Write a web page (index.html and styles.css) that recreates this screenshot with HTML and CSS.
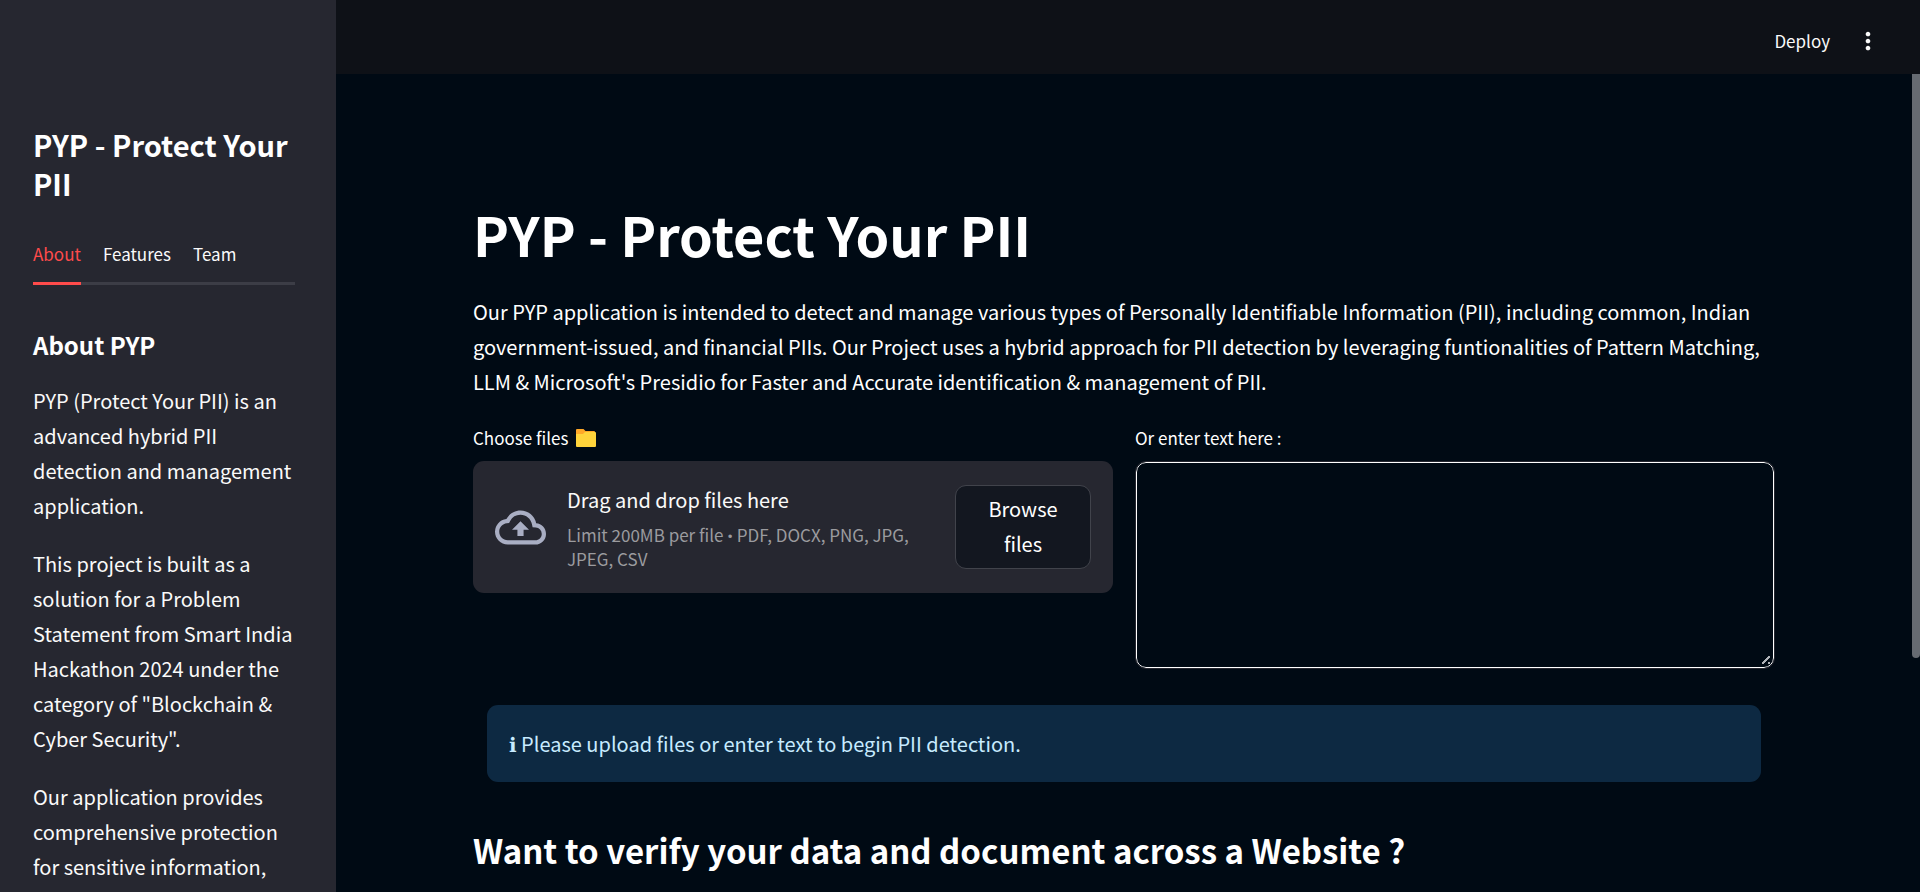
FILE: index.html
```html
<!DOCTYPE html>
<html lang="en">
<head>
<meta charset="utf-8">
<meta name="viewport" content="width=device-width, initial-scale=1">
<title>PYP - Protect Your PII</title>
<link rel="stylesheet" href="styles.css">
</head>
<body>
<div class="app">
  <aside class="sidebar">
    <h2 class="sidebar-title">PYP - Protect Your PII</h2>
    <div class="tabs" role="tablist">
      <button class="tab tab-active" type="button" role="tab" aria-selected="true">About</button>
      <button class="tab" type="button" role="tab" aria-selected="false">Features</button>
      <button class="tab" type="button" role="tab" aria-selected="false">Team</button>
    </div>
    <section class="about" role="tabpanel">
      <h3 class="about-title">About PYP</h3>
      <p>PYP (Protect Your PII) is an advanced hybrid PII detection and management application.</p>
      <p>This project is built as a solution for a Problem Statement from Smart India Hackathon 2024 under the category of "Blockchain &amp; Cyber Security".</p>
      <p>Our application provides comprehensive protection for sensitive information,</p>
    </section>
  </aside>
  <div class="page">
    <header class="toolbar">
      <button class="deploy" type="button">Deploy</button>
      <button class="menu" type="button" aria-label="Main menu">
        <svg class="menu-icon" viewBox="0 0 24 24" aria-hidden="true"><path d="M12 8c1.100 0 2-.9 2-2s-.9-2-2-2-2 .9-2 2 .9 2 2 2zm0 2c-1.100 0-2 .9-2 2s.9 2 2 2 2-.9 2-2-.9-2-2-2zm0 6c-1.100 0-2 .9-2 2s.9 2 2 2 2-.9 2-2-.9-2-2-2z"/></svg>
      </button>
    </header>
    <main class="content">
      <h1 class="title">PYP - Protect Your PII</h1>
      <p class="intro">Our PYP application is intended to detect and manage various types of Personally Identifiable Information (PII), including common, Indian government-issued, and financial PIIs. Our Project uses a hybrid approach for PII detection by leveraging funtionalities of Pattern Matching, LLM &amp; Microsoft's Presidio for Faster and Accurate identification &amp; management of PII.</p>
      <div class="inputs">
        <div class="field">
          <div class="label" id="files-label">Choose files
            <svg class="folder" viewBox="0 0 20 18" aria-hidden="true"><path fill="#ffa828" d="M1 0h6.500l2 2H18a1 1 0 0 1 1 1v5H0V1a1 1 0 0 1 1-1z"/><path fill="#ffd43b" d="M0 5h7l2-2h10a1 1 0 0 1 1 1v13a1 1 0 0 1-1 1H1a1 1 0 0 1-1-1z"/></svg>
          </div>
          <div class="dropzone" role="group" aria-labelledby="files-label">
            <svg class="cloud" viewBox="0 0 24 24" aria-hidden="true"><path d="M19.350 10.040A7.490 7.490 0 0 0 12 4C9.110 4 6.600 5.640 5.350 8.040A5.994 5.994 0 0 0 0 14c0 3.310 2.690 6 6 6h13c2.760 0 5-2.240 5-5 0-2.640-2.050-4.780-4.650-4.960zM19 18H6c-2.210 0-4-1.790-4-4 0-2.050 1.530-3.760 3.560-3.970l1.070-.11.5-.95A5.469 5.469 0 0 1 12 6c2.620 0 4.880 1.860 5.390 4.430l.3 1.500 1.530.11A2.980 2.980 0 0 1 22 15c0 1.650-1.350 3-3 3zM8 13h2.550v3h2.900v-3H16l-4-4-4 4z"/></svg>
            <div class="drop-text">
              <span class="drop-main">Drag and drop files here</span>
              <small class="drop-hint">Limit 200MB per file <span class="bullet">•</span> PDF, DOCX, PNG, JPG, JPEG, CSV</small>
            </div>
            <button class="browse" type="button">Browse files</button>
          </div>
        </div>
        <div class="field">
          <label class="label" for="text-input">Or enter text here :</label>
          <div class="textbox"><textarea id="text-input" class="textarea"></textarea></div>
        </div>
      </div>
      <div class="alert" role="alert"><span class="info">ℹ</span> Please upload files or enter text to begin PII detection.</div>
      <h2 class="subtitle">Want to verify your data and document across a Website ?</h2>
    </main>
    <div class="scroll-thumb"></div>
  </div>
</div>
</body>
</html>
```
FILE: styles.css
```css
* { box-sizing: border-box; }

body {
  margin: 0;
  background: #000a14;
  color: #fafafa;
  font-family: "Noto Sans CJK SC", "Noto Sans CJK JP", "Noto Sans", sans-serif;
  font-size: 20px;
  line-height: 35px;
}

h1, h2, h3, p { margin: 0; }

button {
  margin: 0;
  padding: 0;
  border: 0;
  background: none;
  color: inherit;
  font: inherit;
  cursor: pointer;
}

.app {
  display: flex;
  height: 100vh;
  overflow: hidden;
}

.sidebar {
  flex: none;
  width: 336px;
  padding: 125px 41px 0 33px;
  background: #262730;
  overflow: hidden;
}

.sidebar-title {
  font-size: 29px;
  font-weight: 700;
  line-height: 39px;
  color: #fff;
}

.tabs {
  display: flex;
  gap: 22px;
  margin-top: 24px;
  border-bottom: 3px solid #3c3d46;
}

.tab {
  height: 58px;
  margin-bottom: -3px;
  padding-bottom: 2px;
  border-bottom: 3px solid transparent;
  font-size: 17px;
}

.tab-active {
  border-color: #ff4b4b;
  color: #ff4b4b;
}

.about {
  display: flex;
  flex-direction: column;
  gap: 23px;
  padding-top: 42px;
}

.about-title {
  margin-bottom: -2px;
  font-size: 24px;
  font-weight: 700;
  color: #fff;
}

.page {
  position: relative;
  flex: 1;
  min-width: 0;
}

.toolbar {
  display: flex;
  align-items: center;
  justify-content: flex-end;
  gap: 24px;
  height: 74px;
  padding: 8px 38px 0 0;
  background: #0e1117;
}

.deploy {
  padding-bottom: 2px;
  font-size: 17px;
}

.menu { display: flex; }

.menu-icon {
  width: 28px;
  height: 28px;
  fill: #fafafa;
}

.content { padding: 124px 145px 0 137px; }

.title {
  font-size: 54px;
  font-weight: 700;
  line-height: 72px;
  color: #fff;
}

.intro {
  margin-top: 24px;
  color: #fff;
}

.inputs {
  display: grid;
  grid-template-columns: 1fr 1fr;
  gap: 22px;
  margin-top: 20px;
}

.label {
  display: flex;
  align-items: center;
  gap: 8px;
  height: 42px;
  padding-bottom: 6px;
  font-size: 17px;
  color: #fff;
}

.folder {
  width: 20px;
  height: 18px;
  margin-top: 2px;
}

.dropzone {
  display: flex;
  align-items: center;
  min-height: 132px;
  padding: 22px;
  border-radius: 11px;
  background: #262730;
}

.cloud {
  flex: none;
  width: 51px;
  height: 51px;
  margin-right: 21px;
  fill: #a9aec3;
}

.drop-text {
  display: flex;
  flex: 1;
  flex-direction: column;
  gap: 8px;
  min-width: 0;
}

.drop-main { line-height: 31px; }

.drop-hint {
  font-size: 17px;
  line-height: 24px;
  color: #9b9b9f;
}

.bullet {
  font-family: Roboto, "Noto Sans", sans-serif;
  line-height: 1;
}

.browse {
  flex: none;
  width: 136px;
  margin-left: 22px;
  padding: 5px 22px 7px;
  border: 1px solid #41434b;
  border-radius: 11px;
  background: #131720;
  color: #fff;
}

.textbox {
  height: 208px;
  border: 1px solid #262730;
  border-radius: 11px;
  overflow: hidden;
}

.textarea {
  display: block;
  width: 100%;
  height: 100%;
  padding: 16px;
  border: 1px solid #fff;
  border-radius: 10px;
  background: #000a14;
  color: #fff;
  font: inherit;
}

.textarea::-webkit-resizer {
  background:
    linear-gradient(135deg, transparent 42%, #b0b3b8 42% 58%, transparent 58%) 4px 4px / 8px 8px no-repeat,
    linear-gradient(#b0b3b8, #b0b3b8) 10px 10px / 2px 2px no-repeat;
}

.alert {
  margin: 36px 14px 0;
  padding: 21px 22px;
  border-radius: 11px;
  background: #0d2942;
  color: #c7ebff;
}

.info {
  font-family: "DejaVu Sans", sans-serif;
  line-height: 1;
}

.subtitle {
  margin-top: 45px;
  font-size: 33px;
  font-weight: 700;
  line-height: 46px;
  color: #fff;
}

.scroll-thumb {
  position: absolute;
  top: 74px;
  right: 0;
  width: 8px;
  height: 584px;
  border-radius: 0 0 4px 4px;
  background: #666b72;
}
```
